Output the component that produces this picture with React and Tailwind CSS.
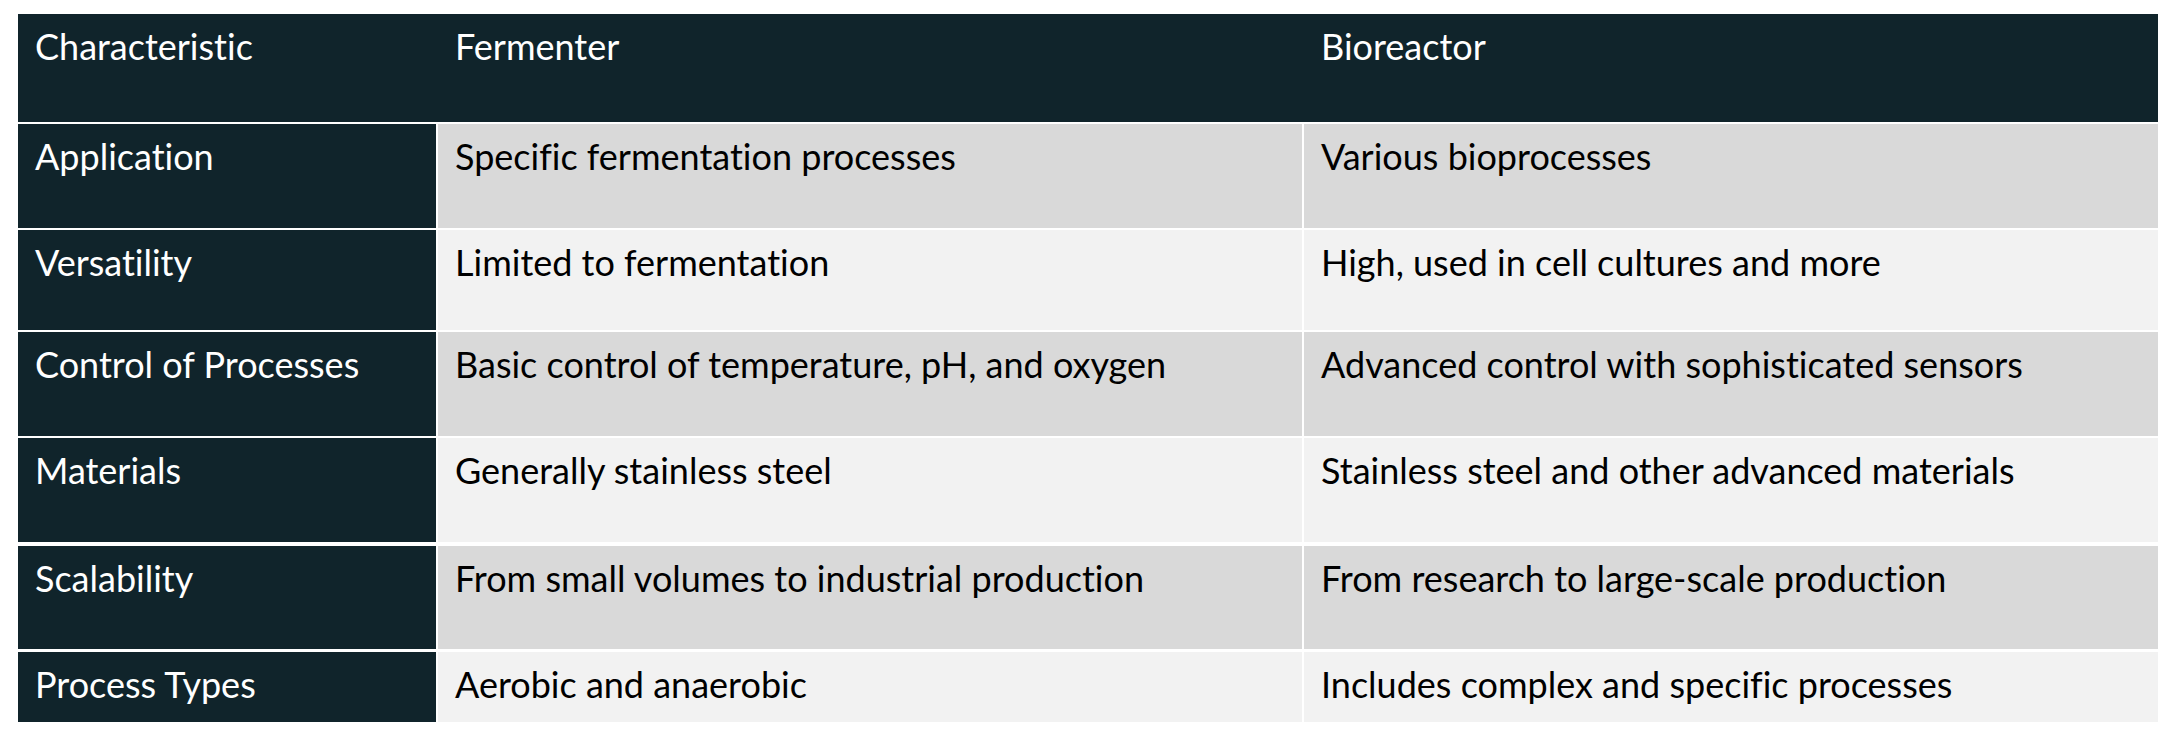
const rows = [
  ["Application", "Specific fermentation processes", "Various bioprocesses", "h-[104px]", "bg-[#d9d9d9]"],
  ["Versatility", "Limited to fermentation", "High, used in cell cultures and more", "h-[100px]", "bg-[#f2f2f2]"],
  ["Control of Processes", "Basic control of temperature, pH, and oxygen", "Advanced control with sophisticated sensors", "h-[104px]", "bg-[#d9d9d9]"],
  ["Materials", "Generally stainless steel", "Stainless steel and other advanced materials", "h-[104px]", "bg-[#f2f2f2]"],
  ["Scalability", "From small volumes to industrial production", "From research to large-scale production", "mt-[2px] h-[103px]", "bg-[#d9d9d9]"],
  ["Process Types", "Aerobic and anaerobic", "Includes complex and specific processes", "mt-[1px] h-[70px]", "bg-[#f2f2f2]"],
];

export default function App() {
  return (
    <div className="min-h-screen bg-white pl-[18px] pt-[14px] font-['Lato',sans-serif] text-[36px] leading-[42px] [font-variant-ligatures:none]">
      <div className="flex w-[2140px] flex-col gap-[2px]">
        <div className="flex h-[108px] bg-[#10242b] text-white">
          <div className="w-[420px] pl-[17px] pt-[11px]">Characteristic</div>
          <div className="w-[866px] pl-[17px] pt-[11px]">Fermenter</div>
          <div className="flex-1 pl-[17px] pt-[11px]">Bioreactor</div>
        </div>
        {rows.map(([label, fer, bio, h, bg]) => (
          <div key={label} className={`grid grid-cols-[418px_864px_1fr] gap-x-[2px] ${h}`}>
            <div className="bg-[#10242b] pl-[17px] pt-[11px] text-white">{label}</div>
            <div className={`${bg} pl-[17px] pt-[11px] text-black`}>{fer}</div>
            <div className={`${bg} pl-[17px] pt-[11px] text-black`}>{bio}</div>
          </div>
        ))}
      </div>
    </div>
  );
}
